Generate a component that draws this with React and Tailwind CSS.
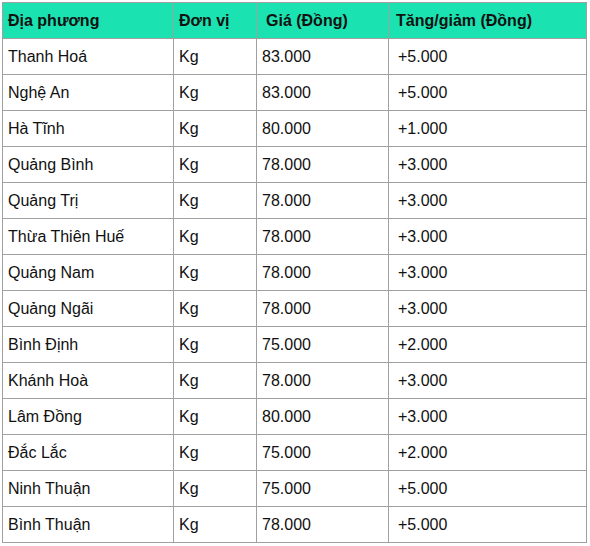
import React from 'react';

const rows = [
    ['Thanh Hoá', 'Kg', '83.000', '+5.000'],
    ['Nghệ An', 'Kg', '83.000', '+5.000'],
    ['Hà Tĩnh', 'Kg', '80.000', '+1.000'],
    ['Quảng Bình', 'Kg', '78.000', '+3.000'],
    ['Quảng Trị', 'Kg', '78.000', '+3.000'],
    ['Thừa Thiên Huế', 'Kg', '78.000', '+3.000'],
    ['Quảng Nam', 'Kg', '78.000', '+3.000'],
    ['Quảng Ngãi', 'Kg', '78.000', '+3.000'],
    ['Bình Định', 'Kg', '75.000', '+2.000'],
    ['Khánh Hoà', 'Kg', '78.000', '+3.000'],
    ['Lâm Đồng', 'Kg', '80.000', '+3.000'],
    ['Đắc Lắc', 'Kg', '75.000', '+2.000'],
    ['Ninh Thuận', 'Kg', '75.000', '+5.000'],
    ['Bình Thuận', 'Kg', '78.000', '+5.000'],
];

const cell = 'border border-[#a0a0a0] h-[36px] px-[5px] align-middle';

export default function App() {
    return (
        <div className="pl-[2px] pt-[2px] font-['Liberation_Sans',Arial,sans-serif] text-[16px] text-[#111]">
            <table className="table-fixed border-collapse w-[584px]">
                <colgroup>
                    <col className="w-[171px]" />
                    <col className="w-[83px]" />
                    <col className="w-[132px]" />
                    <col className="w-[198px]" />
                </colgroup>
                <thead>
                    <tr className="bg-[#1ae2b0] font-bold text-left">
                        <th className={cell}>Địa phương</th>
                        <th className={cell}>Đơn vị</th>
                        <th className={cell}><span className="pl-[4px]">Giá (Đồng)</span></th>
                        <th className={cell}><span className="pl-[2px]">Tăng/giảm (Đồng)</span></th>
                    </tr>
                </thead>
                <tbody>
                    {rows.map(r => (
                        <tr key={r[0]} className="bg-white">
                            <td className={cell}>{r[0]}</td>
                            <td className={cell}>{r[1]}</td>
                            <td className={cell}>{r[2]}</td>
                            <td className={cell}><span className="pl-[4px]">{r[3]}</span></td>
                        </tr>
                    ))}
                </tbody>
            </table>
        </div>
    );
}
